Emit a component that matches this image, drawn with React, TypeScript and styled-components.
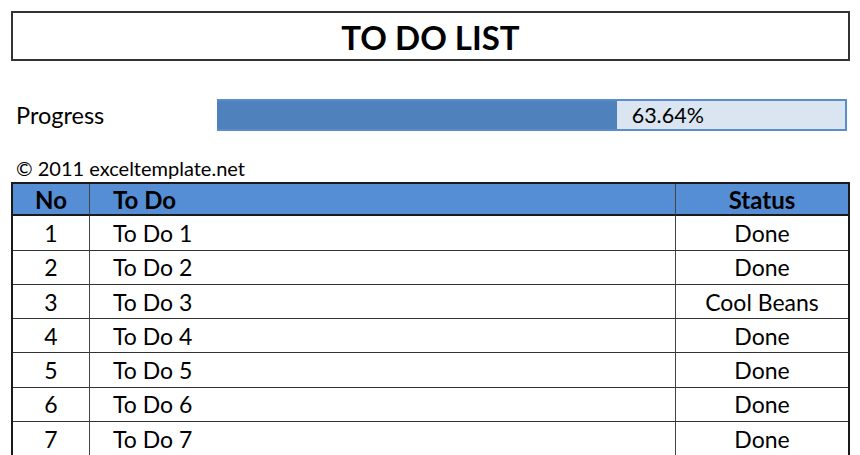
import React from "react";
import styled, { createGlobalStyle } from "styled-components";

const Global = createGlobalStyle`
  html, body { margin: 0; padding: 0; background: #ffffff; }
  body { font-family: Lato, "Open Sans", sans-serif; color: #000; }
`;

const Page = styled.div`
  width: 860px;
  height: 455px;
  overflow: hidden;
  box-sizing: border-box;
  padding: 11px 10px 0 11px;
  display: flex;
  flex-direction: column;
`;

const TitleBox = styled.div`
  height: 50px;
  flex: none;
  box-sizing: border-box;
  border: 2px solid #333;
  display: flex;
  align-items: center;
  justify-content: center;
`;

const Title = styled.h1`
  margin: 0;
  font-size: 33px;
  font-weight: 700;
  line-height: 1;
  padding-top: 2px;
`;

const ProgressRow = styled.div`
  margin-top: 38px;
  flex: none;
  display: grid;
  grid-template-columns: 206px 630px;
  align-items: center;
  height: 32px;
`;

const Label = styled.div`
  padding-left: 5px;
  font-size: 23.5px;
  line-height: 32px;
`;

const Bar = styled.div`
  height: 32px;
  box-sizing: border-box;
  background: #dbe5f1;
  border: 2px solid #5b8ccc;
  border-left: none;
  display: flex;
`;

const Fill = styled.div`
  height: 100%;
  background: #4f81bd;
  flex: none;
`;

const BarText = styled.div`
  padding-left: 15px;
  display: flex;
  align-items: center;
  font-size: 21.5px;
`;

const Copyright = styled.div`
  margin-top: 26px;
  padding-left: 5px;
  font-size: 20px;
  line-height: 22px;
  height: 22px;
  flex: none;
`;

const Table = styled.div`
  margin-top: 3px;
  width: 839px;
  display: grid;
  grid-template-columns: 77px 586px 172px;
  border-top: 2px solid #1a1a1a;
  border-left: 2px solid #1a1a1a;
  border-right: 2px solid #1a1a1a;
  box-sizing: border-box;
`;

const Cell = styled.div<{ $head?: boolean; $align?: "center" | "left"; $last?: boolean }>`
  height: ${(p) => (p.$head ? "32.3px" : "34.3px")};
  box-sizing: border-box;
  display: flex;
  align-items: center;
  justify-content: ${(p) => (p.$align === "left" ? "flex-start" : "center")};
  padding-left: ${(p) => (p.$align === "left" ? "23px" : "0")};
  background: ${(p) => (p.$head ? "#558ed5" : "#fff")};
  font-weight: ${(p) => (p.$head ? 700 : 400)};
  font-size: ${(p) => (p.$head ? "24px" : "23px")};
  border-bottom: ${(p) => (p.$head ? "2px solid #1a1a1a" : "1px solid #333")};
  border-right: ${(p) => (p.$last ? "none" : "1px solid #444")};
`;

const rows = [
  { no: 1, todo: "To Do 1", status: "Done" },
  { no: 2, todo: "To Do 2", status: "Done" },
  { no: 3, todo: "To Do 3", status: "Cool Beans" },
  { no: 4, todo: "To Do 4", status: "Done" },
  { no: 5, todo: "To Do 5", status: "Done" },
  { no: 6, todo: "To Do 6", status: "Done" },
  { no: 7, todo: "To Do 7", status: "Done" },
];

const progress = 63.64;

export default function App() {
  return (
    <>
      <Global />
      <Page>
        <TitleBox>
          <Title>TO DO LIST</Title>
        </TitleBox>
        <ProgressRow>
          <Label>Progress</Label>
          <Bar>
            <Fill style={{ width: `${progress}%` }} />
            <BarText>{progress.toFixed(2)}%</BarText>
          </Bar>
        </ProgressRow>
        <Copyright>© 2011 exceltemplate.net</Copyright>
        <Table>
          <Cell $head>No</Cell>
          <Cell $head $align="left">To Do</Cell>
          <Cell $head $last>Status</Cell>
          {rows.map((r) => (
            <React.Fragment key={r.no}>
              <Cell>{r.no}</Cell>
              <Cell $align="left">{r.todo}</Cell>
              <Cell $last>{r.status}</Cell>
            </React.Fragment>
          ))}
        </Table>
      </Page>
    </>
  );
}
